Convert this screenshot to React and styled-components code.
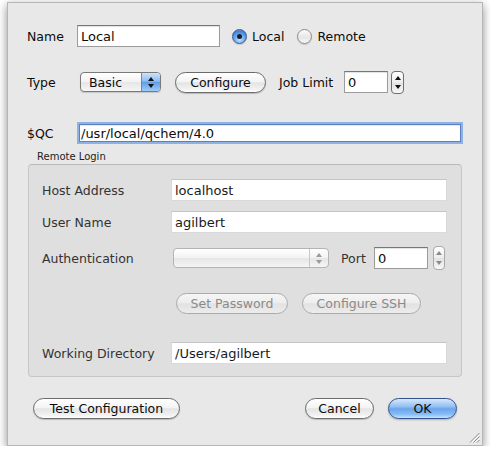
import React from 'react';
import styled, { createGlobalStyle, css } from 'styled-components';

const GlobalStyle = createGlobalStyle`
  html, body { margin: 0; padding: 0; background: #ffffff; }
  body {
    font-family: 'DejaVu Sans', 'Liberation Sans', sans-serif;
    font-size: 12.5px;
    color: #111;
  }
`;

const Window = styled.div`
  box-sizing: border-box;
  position: relative;
  width: 476px;
  height: 444px;
  margin: 2px 0 0 7px;
  padding: 22px 19px 0 19px;
  background: #e8e8e8;
  border: 1px solid #b6b6b6;
  box-shadow: 0 3px 9px rgba(0, 0, 0, 0.45);
  display: flex;
  flex-direction: column;
`;

const Row = styled.div`
  display: flex;
  align-items: center;
  height: ${(p) => p.$h || 22}px;
  margin-top: ${(p) => p.$mt || 0}px;
  padding-left: ${(p) => p.$pl || 0}px;
  justify-content: ${(p) => p.$justify || 'flex-start'};
`;

const Label = styled.span`
  display: inline-block;
  width: ${(p) => (p.$w ? `${p.$w}px` : 'auto')};
  margin-left: ${(p) => p.$ml || 0}px;
  padding-top: 1px;
  color: ${(p) => (p.$dim ? '#333' : '#0c0c0c')};
  white-space: nowrap;
`;

const Field = styled.div`
  box-sizing: border-box;
  width: ${(p) => (p.$w ? `${p.$w}px` : 'auto')};
  flex: ${(p) => (p.$w ? 'none' : 1)};
  height: 22px;
  margin-left: ${(p) => p.$ml || 0}px;
  padding: 1px 3px 0;
  display: flex;
  align-items: center;
  font-size: 13px;
  background: #fff;
  border: 1px solid #9c9c9c;
  border-top-color: #777;
  box-shadow: inset 0 1px 1px rgba(0, 0, 0, 0.12);
  color: #0c0c0c;
  white-space: nowrap;
  ${(p) =>
    p.$soft &&
    css`
      border: 1px solid #d9d9d9;
      border-top-color: #c4c4c4;
      box-shadow: none;
      color: #1a1a1a;
    `}
  ${(p) =>
    p.$focus &&
    css`
      height: 18px;
      margin: 0 2px 0 ${p.$ml + 2}px;
      padding-left: 1px;
      border: 1px solid #5c80c0;
      box-shadow: 0 0 0 2px #8eb2e6, inset 0 1px 1px rgba(0, 0, 0, 0.1);
    `}
`;

const Radio = styled.span`
  box-sizing: border-box;
  width: 15px;
  height: 15px;
  border-radius: 50%;
  margin-left: ${(p) => p.$ml || 0}px;
  margin-right: 5px;
  display: inline-flex;
  align-items: center;
  justify-content: center;
  border: 1px solid ${(p) => (p.$on ? '#385a96' : '#8c8c8c')};
  background: ${(p) =>
    p.$on
      ? 'radial-gradient(circle at 50% 75%, #bfe2ff 0%, #6aa6ec 45%, #3f7fd6 75%, #a9c9f1 100%)'
      : 'linear-gradient(#fdfdfd, #e6e6e6 55%, #f6f6f6)'};
  box-shadow: 0 1px 1px rgba(0, 0, 0, 0.15);
  &::after {
    content: '';
    display: ${(p) => (p.$on ? 'block' : 'none')};
    width: 5px;
    height: 5px;
    border-radius: 50%;
    background: #16202e;
  }
`;

const pill = css`
  box-sizing: border-box;
  height: 21px;
  border-radius: 11px;
  display: inline-flex;
  align-items: center;
  justify-content: center;
  white-space: nowrap;
  font-family: inherit;
  font-size: 12.5px;
`;

const Button = styled.div`
  ${pill};
  width: ${(p) => p.$w}px;
  margin-left: ${(p) => p.$ml || 0}px;
  color: #0c0c0c;
  border: 1px solid #6b6b6b;
  background: linear-gradient(#ffffff 0%, #f4f4f4 45%, #e4e4e4 52%, #f2f2f2 85%, #ffffff 100%);
  box-shadow: 0 1px 1px rgba(0, 0, 0, 0.2);
  ${(p) =>
    p.$disabled &&
    css`
      color: #8a8a8a;
      border-color: #ababab;
      background: linear-gradient(#f6f6f6 0%, #eeeeee 45%, #e2e2e2 52%, #ececec 100%);
      box-shadow: none;
    `}
  ${(p) =>
    p.$default &&
    css`
      border-color: #33518c;
      background: linear-gradient(#d6e8fd 0%, #93c0f3 40%, #6aa5ec 52%, #86bbf5 80%, #c6e3fd 100%);
      box-shadow: 0 1px 2px rgba(0, 0, 0, 0.25);
    `}
`;

const Popup = styled.div`
  box-sizing: border-box;
  width: ${(p) => p.$w}px;
  height: 20px;
  margin-left: ${(p) => p.$ml || 0}px;
  display: flex;
  border: 1px solid ${(p) => (p.$disabled ? '#b4b4b4' : '#7a7a7a')};
  border-radius: 4px;
  overflow: hidden;
  background: linear-gradient(#ffffff 0%, #f3f3f3 48%, #e6e6e6 52%, #f5f5f5 100%);
  box-shadow: ${(p) => (p.$disabled ? 'none' : '0 1px 1px rgba(0,0,0,0.15)')};
`;

const PopupText = styled.span`
  flex: 1;
  padding-left: 8px;
  display: flex;
  align-items: center;
  color: #0c0c0c;
`;

const PopupArrows = styled.span`
  width: 18px;
  display: flex;
  flex-direction: column;
  align-items: center;
  justify-content: center;
  gap: 3px;
  border-left: 1px solid ${(p) => (p.$disabled ? '#c8c8c8' : '#6d88b8')};
  background: ${(p) =>
    p.$disabled
      ? 'transparent'
      : 'linear-gradient(#cfe3fb 0%, #8fbcf2 45%, #5f9ee9 52%, #9fccf8 100%)'};
`;

const Tri = styled.span`
  width: 0;
  height: 0;
  border-left: 3px solid transparent;
  border-right: 3px solid transparent;
  ${(p) =>
    p.$down
      ? css`border-top: 4px solid ${p.$c};`
      : css`border-bottom: 4px solid ${p.$c};`}
`;

const Stepper = styled.div`
  box-sizing: border-box;
  width: ${(p) => p.$w || 13}px;
  height: ${(p) => p.$h || 23}px;
  margin-left: ${(p) => p.$ml || 0}px;
  border: 1px solid ${(p) => (p.$disabled ? '#a8a8a8' : '#6f6f6f')};
  border-radius: 4px;
  background: linear-gradient(#ffffff, #ededed 50%, #e2e2e2 51%, #f7f7f7);
  display: flex;
  flex-direction: column;
  align-items: center;
  justify-content: space-between;
  padding: 4px 0;
`;

const GroupTitle = styled.div`
  font-size: 10px;
  height: 14px;
  line-height: 14px;
  margin: 6px 0 0 10px;
  color: #222;
`;

const Group = styled.div`
  box-sizing: border-box;
  margin: 0 1px 0 1px;
  padding: 14px 14px 12px 13px;
  background: #dfdfdf;
  border: 1px solid #c6c6c6;
  border-top-color: #b9b9b9;
  border-radius: 4px;
`;

const Grip = styled.svg`
  position: absolute;
  right: 2px;
  bottom: 2px;
`;

const ArrowPair = ({ color }) => (
  <>
    <Tri $c={color} />
    <Tri $down $c={color} />
  </>
);

export default function App() {
  return (
    <>
      <GlobalStyle />
      <Window>
        <Row $h={22}>
          <Label $w={50}>Name</Label>
          <Field $w={143}>Local</Field>
          <Radio $on $ml={12} />
          <Label>Local</Label>
          <Radio $ml={13} />
          <Label>Remote</Label>
        </Row>

        <Row $h={24} $mt={23}>
          <Label $w={53}>Type</Label>
          <Popup $w={81}>
            <PopupText>Basic</PopupText>
            <PopupArrows>
              <ArrowPair color="#111" />
            </PopupArrows>
          </Popup>
          <Button $w={91} $ml={14}>Configure</Button>
          <Label $ml={13} $w={65}>Job Limit</Label>
          <Field $w={44}>0</Field>
          <Stepper $ml={3}>
            <ArrowPair color="#111" />
          </Stepper>
        </Row>

        <Row $h={22} $mt={28}>
          <Label $w={50}>$QC</Label>
          <Field $focus $ml={0}>/usr/local/qchem/4.0</Field>
        </Row>

        <GroupTitle>Remote Login</GroupTitle>
        <Group>
          <Row>
            <Label $dim $w={129}>Host Address</Label>
            <Field $soft>localhost</Field>
          </Row>
          <Row $mt={10}>
            <Label $dim $w={129}>User Name</Label>
            <Field $soft>agilbert</Field>
          </Row>
          <Row $h={24} $mt={13}>
            <Label $dim $w={129}>Authentication</Label>
            <Popup $disabled $w={156} $ml={2}>
              <PopupText />
              <PopupArrows $disabled>
                <ArrowPair color="#9a9a9a" />
              </PopupArrows>
            </Popup>
            <Label $dim $ml={12} $w={33}>Port</Label>
            <Field $w={54}>0</Field>
            <Stepper $disabled $ml={5} $w={12} $h={24}>
              <ArrowPair color="#8a8a8a" />
            </Stepper>
          </Row>
          <Row $h={21} $mt={23} $pl={134}>
            <Button $disabled $w={112}>Set Password</Button>
            <Button $disabled $w={119} $ml={14}>Configure SSH</Button>
          </Row>
          <Row $mt={28}>
            <Label $dim $w={129}>Working Directory</Label>
            <Field $soft>/Users/agilbert</Field>
          </Row>
        </Group>

        <Row $h={21} $mt={21} $justify="space-between">
          <Button $w={147} $ml={6}>Test Configuration</Button>
          <Row $h={21} style={{ marginRight: 6 }}>
            <Button $w={69}>Cancel</Button>
            <Button $default $w={69} $ml={14}>OK</Button>
          </Row>
        </Row>

        <Grip width="11" height="11" viewBox="0 0 11 11">
          <g stroke="#8a8a8a" strokeWidth="1">
            <line x1="10.5" y1="1" x2="1" y2="10.5" />
            <line x1="10.5" y1="4.5" x2="4.5" y2="10.5" />
            <line x1="10.5" y1="8" x2="8" y2="10.5" />
          </g>
          <g stroke="#ffffff" strokeWidth="1">
            <line x1="10.5" y1="2.5" x2="2.5" y2="10.5" />
            <line x1="10.5" y1="6" x2="6" y2="10.5" />
          </g>
        </Grip>
      </Window>
    </>
  );
}
